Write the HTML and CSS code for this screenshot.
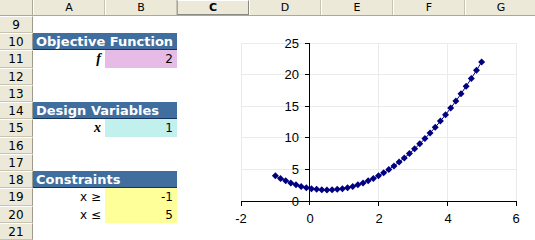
FILE: index.html
```html
<!DOCTYPE html>
<html lang="en">
  <head>
    <meta charset="UTF-8" />
    <title>Sheet</title>
    <link rel="stylesheet" href="styles.css">
  </head>
  <body>
    <div class="sheet">
      <div class="colheads">
        <div class="corner"></div>
        <div class="ch">A</div>
        <div class="ch">B</div>
        <div class="ch valgt">C</div>
        <div class="ch">D</div>
        <div class="ch">E</div>
        <div class="ch">F</div>
        <div class="ch">G</div>
      </div>

      <div class="row"><div class="rh">9</div></div>
      <div class="row"><div class="rh">10</div><div class="band">Objective Function</div></div>
      <div class="row tall"><div class="rh">11</div><div class="label"><i class="sym">f</i></div><div class="val pink">2</div></div>
      <div class="row"><div class="rh">12</div></div>
      <div class="row"><div class="rh">13</div></div>
      <div class="row"><div class="rh">14</div><div class="band">Design Variables</div></div>
      <div class="row tall"><div class="rh">15</div><div class="label"><i class="sym">x</i></div><div class="val aqua">1</div></div>
      <div class="row"><div class="rh">16</div></div>
      <div class="row"><div class="rh">17</div></div>
      <div class="row"><div class="rh">18</div><div class="band">Constraints</div></div>
      <div class="row tall"><div class="rh">19</div><div class="label">x &ge;</div><div class="val yellow">-1</div></div>
      <div class="row"><div class="rh">20</div><div class="label">x &le;</div><div class="val yellow">5</div></div>
      <div class="row"><div class="rh">21</div></div>
      <div class="row rest"><div class="rh"></div></div>
    </div>

    <div class="chart">
      <svg width="310" height="205" viewBox="0 0 310 205">
        <g class="grid">
          <line x1="19" y1="13.5" x2="295" y2="13.5" />
          <line x1="19" y1="44.5" x2="295" y2="44.5" />
          <line x1="19" y1="76.5" x2="295" y2="76.5" />
          <line x1="19" y1="107.5" x2="295" y2="107.5" />
          <line x1="19" y1="139.5" x2="295" y2="139.5" />
          <line x1="19.5" y1="13" x2="19.5" y2="171" />
          <line x1="156.5" y1="13" x2="156.5" y2="171" />
          <line x1="225.5" y1="13" x2="225.5" y2="171" />
          <line x1="294.5" y1="13" x2="294.5" y2="171" />
        </g>
        <g id="serie"></g>
        <g class="akse">
          <line x1="87.5" y1="13" x2="87.5" y2="175" />
          <line x1="19" y1="171.5" x2="295" y2="171.5" />
          <line x1="83" y1="13.5" x2="88" y2="13.5" />
          <line x1="83" y1="44.5" x2="88" y2="44.5" />
          <line x1="83" y1="76.5" x2="88" y2="76.5" />
          <line x1="83" y1="107.5" x2="88" y2="107.5" />
          <line x1="83" y1="139.5" x2="88" y2="139.5" />
          <line x1="83" y1="171.5" x2="88" y2="171.5" />
          <line x1="19.5" y1="171" x2="19.5" y2="176" />
          <line x1="156.5" y1="171" x2="156.5" y2="176" />
          <line x1="225.5" y1="171" x2="225.5" y2="176" />
          <line x1="294.5" y1="171" x2="294.5" y2="176" />
        </g>
        <g class="tal_y">
          <text x="77" y="18">25</text>
          <text x="77" y="49">20</text>
          <text x="77" y="81">15</text>
          <text x="77" y="112">10</text>
          <text x="77" y="144">5</text>
          <text x="77" y="176">0</text>
        </g>
        <g class="tal_x">
          <text x="19" y="193">-2</text>
          <text x="88" y="193">0</text>
          <text x="157" y="193">2</text>
          <text x="226" y="193">4</text>
          <text x="294" y="193">6</text>
        </g>
      </svg>
    </div>

    <script src="script.js"></script>
  </body>
</html>
```

FILE: styles.css
```css
* {
  box-sizing: border-box;
  margin: 0;
  padding: 0;
}

body {
  position: relative;
  width: 535px;
  height: 240px;
  overflow: hidden;
  background-color: #fff;
  font-family: "DejaVu Sans", Verdana, sans-serif;
  font-size: 11px;
}

.colheads {
  display: grid;
  grid-template-columns: 33px repeat(7, 72px);
  height: 16px;
  background-color: #ece9d8;
  border-bottom: 1px solid #aca899;
}

.corner {
  border-right: 1px solid #aca899;
}

.ch {
  display: flex;
  justify-content: center;
  align-items: center;
  border-left: 1px solid #fff;
  border-right: 1px solid #c7c3b3;
  color: #000;
}

.ch.valgt {
  font-weight: bold;
  font-family: "DejaVu Sans", sans-serif;
  border: 1px solid #8c8a80;
  border-top-color: #fff;
  border-left-color: #a5a293;
}

.row {
  display: grid;
  grid-template-columns: 33px 72px 72px;
  height: 17px;
}

.row.tall {
  height: 18px;
}

.row.rest {
  height: 3px;
}

.rh {
  display: flex;
  justify-content: center;
  align-items: center;
  background-color: #ece9d8;
  border-top: 1px solid #fff;
  border-bottom: 1px solid #c7c3b3;
  border-right: 1px solid #9e9b8c;
  font-size: 12px;
}

.band {
  grid-column: span 2;
  display: flex;
  align-items: center;
  padding-left: 3px;
  background-color: #3f6e9f;
  border-bottom: 1px solid #13335a;
  color: #fff;
  font-weight: bold;
  font-size: 13px;
}

.label {
  display: flex;
  justify-content: flex-end;
  align-items: center;
  padding-right: 4px;
  font-size: 12px;
}

.sym {
  font-family: "Liberation Serif", "Times New Roman", serif;
  font-weight: bold;
  font-size: 14px;
}

.val {
  display: flex;
  justify-content: flex-end;
  align-items: center;
  padding-right: 4px;
  font-size: 12px;
}

.pink {
  background-color: #e6bbe6;
}

.aqua {
  background-color: #c2f0ec;
}

.yellow {
  background-color: #ffff99;
}

.chart {
  position: absolute;
  left: 222px;
  top: 30px;
  width: 310px;
  height: 205px;
}

.chart svg {
  display: block;
}

.grid line {
  stroke: #ebebeb;
  stroke-width: 1;
}

.akse line {
  stroke: #000;
  stroke-width: 1;
}

.chart text {
  font-family: "Liberation Sans", Arial, sans-serif;
  font-size: 13px;
  fill: #000;
}

.tal_y text {
  text-anchor: end;
}

.tal_x text {
  text-anchor: middle;
}
```

FILE: script.js
```js
// f(x) = x^2 - x + 2, plottet fra -1 til 5
const serie = document.querySelector("#serie");
const ns = "http://www.w3.org/2000/svg";

function px(x) {
  return 19 + (x + 2) * 34.375;
}

function py(y) {
  return 171 - y * 6.32;
}

let punkter = [];
for (let i = 0; i <= 40; i++) {
  const x = -1 + i * 0.15;
  const y = x * x - x + 2;
  punkter.push([px(x), py(y)]);
}

const linje = document.createElementNS(ns, "polyline");
linje.setAttribute("points", punkter.map((p) => p.join(",")).join(" "));
linje.setAttribute("fill", "none");
linje.setAttribute("stroke", "#000080");
linje.setAttribute("stroke-width", "1");
serie.appendChild(linje);

punkter.forEach((p) => {
  const d = document.createElementNS(ns, "path");
  const [cx, cy] = p;
  d.setAttribute(
    "d",
    `M${cx} ${cy - 3.5} L${cx + 3.5} ${cy} L${cx} ${cy + 3.5} L${cx - 3.5} ${cy} Z`
  );
  d.setAttribute("fill", "#000080");
  serie.appendChild(d);
});
```
